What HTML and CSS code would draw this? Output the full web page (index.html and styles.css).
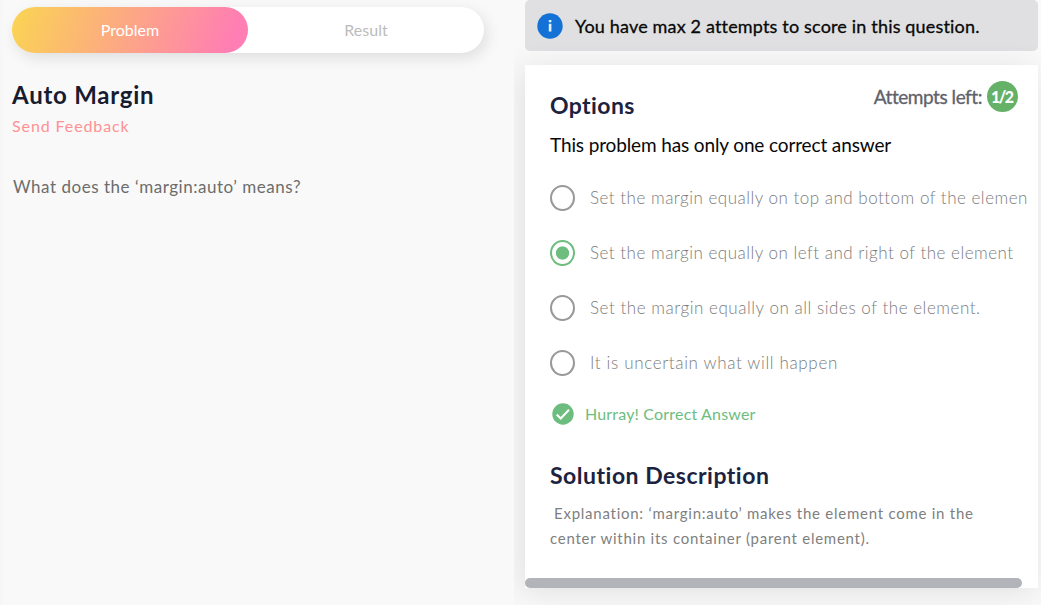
FILE: index.html
```html
<!DOCTYPE html>
<html lang="en">
<head>
<meta charset="utf-8">
<title>Auto Margin</title>
<link rel="stylesheet" href="styles.css">
</head>
<body>
<main class="page">
  <section class="problem">
    <nav class="tabs"><a class="tab active"><span>Problem</span></a><a class="tab"><span>Result</span></a></nav>
    <h1 class="title">Auto Margin</h1>
    <a class="feedback">Send Feedback</a>
    <p class="question">What does the ‘margin:auto’ means?</p>
  </section>
  <section class="answer">
    <div class="notice">
      <svg class="info" viewBox="0 0 26 26"><circle cx="13" cy="13" r="12.7" fill="#1471d6"/><path d="M11.8 7h2.6v2.3h-2.6zM11.8 10.8h2.6v7.8h-2.6z" fill="#e6effa"/></svg>
      <span class="notice-text">You have max 2 attempts to score in this question.</span>
    </div>
    <div class="card">
      <header class="head">
        <h2 class="options-title">Options</h2>
        <div class="attempts"><span>Attempts left:</span><span class="badge">1/2</span></div>
      </header>
      <p class="hint">This problem has only one correct answer</p>
      <ul class="options">
        <li class="option"><i class="radio"></i><span>Set the margin equally on top and bottom of the elemen</span></li>
        <li class="option"><i class="radio checked"></i><span>Set the margin equally on left and right of the element</span></li>
        <li class="option"><i class="radio"></i><span>Set the margin equally on all sides of the element.</span></li>
        <li class="option"><i class="radio"></i><span>It is uncertain what will happen</span></li>
      </ul>
      <div class="result">
        <svg class="check" viewBox="0 0 22 22"><circle cx="11" cy="11" r="10.7" fill="#6cbd7e"/><path d="M4.7 11.5l4 4L17 6.7" fill="none" stroke="#fff" stroke-width="2"/></svg>
        <span class="result-text">Hurray! Correct Answer</span>
      </div>
      <h2 class="solution-title">Solution Description</h2>
      <p class="explain"><span class="indent">Explanation: ‘margin:auto’ makes the element come in the</span><br>center within its container (parent element).</p>
      <div class="scrollbar"></div>
    </div>
  </section>
</main>
</body>
</html>
```
FILE: styles.css
```css
* { box-sizing: border-box; }
body { margin: 0; font-family: Lato, sans-serif; background: #f9f9f9; font-variant-ligatures: none; }
h1, h2, p, ul { margin: 0; padding: 0; }
.page { display: grid; grid-template-columns: 514px 527px; height: 605px; overflow: hidden; white-space: nowrap; }
.problem { padding: 7px 30px 0 12px; background: #f9f9f9; box-shadow: inset 3px 0 #f7f7f7; }
.tabs { display: flex; height: 46px; border-radius: 23px; background: #fff; box-shadow: 3px 5px 15px rgba(0,0,0,.11); }
.tab { flex: 1; display: flex; align-items: center; justify-content: center; padding-bottom: 2px; border-radius: 23px; font-size: 16px; color: #bcbcbc; }
.tab.active { color: #fff; background: linear-gradient(110deg, #fad552 0%, #ff7eb3 92%); }
.title { margin-top: 26px; font-size: 24px; line-height: 32px; color: #171c30; letter-spacing: .75px; }
.feedback { display: block; margin-top: 3px; font-size: 16px; line-height: 24px; color: #ff9194; letter-spacing: .9px; }
.question { margin-top: 37px; padding-left: 1px; font-size: 17px; line-height: 24px; color: #6c6c6c; letter-spacing: .53px; }
.answer { padding: 0 3px 0 11px; background: #f9f9f9; overflow: hidden; }
.notice { height: 51px; display: flex; align-items: center; gap: 11px; padding: 1px 0 0 12px; border-radius: 5px; background: #e0e0e2; }
.info { width: 26px; height: 26px; }
.notice-text { padding-left: 1px; font-size: 18px; color: #080808; letter-spacing: .17px; -webkit-text-stroke: .3px #080808; }
.card { height: 523px; margin-top: 14px; padding: 16px 10px 0 25px; background: #fff; box-shadow: -4px 4px 30px rgba(0,0,0,.1); }
.head { display: flex; justify-content: space-between; height: 48px; padding-right: 10px; }
.options-title { font-size: 23px; line-height: 48px; color: #1c2340; letter-spacing: .4px; }
.attempts { display: flex; gap: 5px; height: 31px; align-items: center; font-size: 19px; color: #60616a; letter-spacing: -.45px; -webkit-text-stroke: .3px #60616a; }
.badge { width: 31px; height: 31px; border-radius: 50%; background: #65b168; color: #fff; font-size: 16px; font-weight: 900; line-height: 31px; text-align: center; -webkit-text-stroke: 0; letter-spacing: -1.6px; text-indent: -1.6px; }
.hint { margin-top: 4px; font-size: 19px; line-height: 24px; color: #080808; letter-spacing: -.13px; }
.options { list-style: none; margin-top: 13px; }
.option { display: flex; align-items: center; height: 55px; gap: 15px; font-size: 17px; font-weight: 300; letter-spacing: .5px; color: #7c7c7c; }
.option:nth-child(3) { letter-spacing: .54px; }
.option:nth-child(4) { letter-spacing: .65px; }
.option span { padding-bottom: 1px; }
.radio { flex: none; width: 25px; height: 26px; border: 2px solid #999; border-radius: 50%; }
.radio.checked { border-color: #6cbd7e; background: radial-gradient(circle at center, #6cbd7e 6.2px, transparent 7px); }
.result { display: flex; align-items: center; height: 26px; margin-top: 11px; padding-left: 2px; gap: 11px; color: #6cbd7e; font-size: 16px; letter-spacing: .18px; }
.result-text { padding-bottom: 2px; }
.check { width: 22px; height: 22px; }
.solution-title { margin-top: 32px; font-size: 23px; line-height: 32px; color: #1c2340; letter-spacing: .5px; }
.explain { margin-top: 10px; font-size: 15px; line-height: 25px; color: #808080; letter-spacing: .75px; }
.indent { margin-left: 4px; }
.scrollbar { width: 497px; height: 10px; margin: 27px 0 0 -25px; border-radius: 5px; background: #b2b4b9; }
```
